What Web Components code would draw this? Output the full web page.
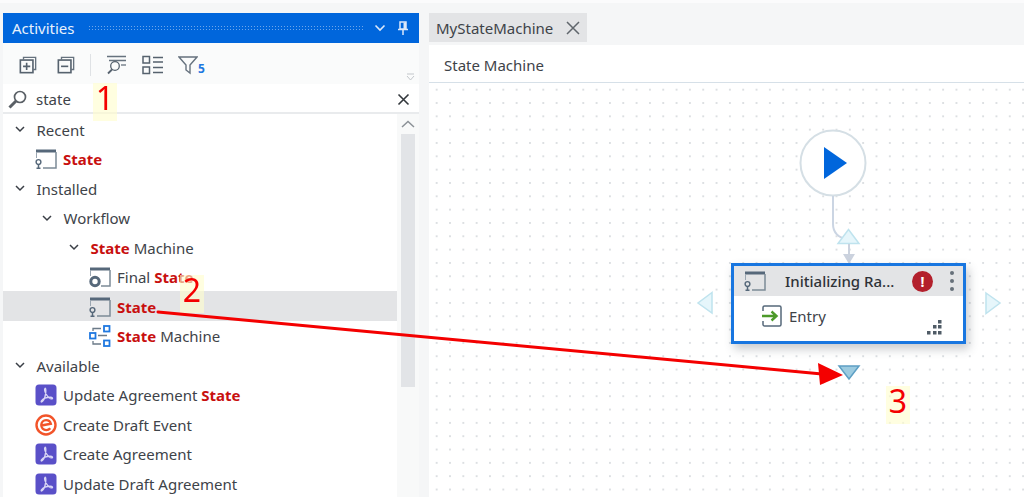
<!DOCTYPE html>
<html>
<head>
<meta charset="utf-8">
<title>MyStateMachine</title>
<style>
  html, body { margin: 0; height: 100%; overflow: hidden; }
  body { background: #f5f6f7; font-family: "Noto Sans", sans-serif; color: #3e4349; }
</style>
</head>
<body>
<studio-app>
  <activities-panel slot="left">
    <tree-row level="0" expander>Recent</tree-row>
    <tree-row level="0" icon="state"><b>State</b></tree-row>
    <tree-row level="0" expander>Installed</tree-row>
    <tree-row level="1" expander>Workflow</tree-row>
    <tree-row level="2" expander><b>State</b> Machine</tree-row>
    <tree-row level="2" icon="final">Final <b>State</b></tree-row>
    <tree-row level="2" icon="state" selected><b>State</b></tree-row>
    <tree-row level="2" icon="machine"><b>State</b> Machine</tree-row>
    <tree-row level="0" expander>Available</tree-row>
    <tree-row level="0" icon="pdf">Update Agreement <b>State</b></tree-row>
    <tree-row level="0" icon="event">Create Draft Event</tree-row>
    <tree-row level="0" icon="pdf">Create Agreement</tree-row>
    <tree-row level="0" icon="pdf">Update Draft Agreement</tree-row>
  </activities-panel>
  <designer-panel slot="right"></designer-panel>
  <note-badge style="left:93px;top:80px">1</note-badge>
  <note-badge style="left:180px;top:272px">2</note-badge>
  <note-badge style="left:886px;top:383px">3</note-badge>
  <drag-arrow></drag-arrow>
</studio-app>

<script>
const ICONS = {
  state: `<svg width="22" height="22" viewBox="0 0 22 22" fill="none">
    <path d="M1 1.500h20v3H1z" fill="#56687a"/>
    <path d="M21 4v16H8" stroke="#7c8a97" stroke-width="1.500"/>
    <path d="M1.500 4v6" stroke="#9aa6b1" stroke-width="1"/>
    <circle cx="3.500" cy="14" r="2.400" stroke="#56687a" stroke-width="1.400"/>
    <path d="M3.500 16.500v3M1.500 20.200h4" stroke="#56687a" stroke-width="1.500"/>
  </svg>`,
  final: `<svg width="22" height="22" viewBox="0 0 22 22" fill="none">
    <path d="M1 1.500h20v3H1z" fill="#56687a"/>
    <path d="M21 4v16H12" stroke="#7c8a97" stroke-width="1.500"/>
    <path d="M1.500 4v6" stroke="#9aa6b1"/>
    <circle cx="6" cy="15.500" r="4.200" stroke="#56687a" stroke-width="3"/>
  </svg>`,
  machine: `<svg width="22" height="22" viewBox="0 0 22 22" fill="none">
    <rect x="15" y="1" width="5.500" height="5.500" stroke="#1f78e0" stroke-width="1.800"/>
    <rect x="1" y="8" width="5.500" height="5.500" stroke="#1f78e0" stroke-width="1.800"/>
    <rect x="15" y="15.500" width="5.500" height="5.500" stroke="#1f78e0" stroke-width="1.800"/>
    <path d="M4 6V3.500h8M9 10.500h9M4 16v3h8" stroke="#6b7a88" stroke-width="1.300"/>
  </svg>`,
  pdf: `<svg width="22" height="22" viewBox="0 0 22 22" fill="none">
    <rect x="0.500" y="0.500" width="21" height="21" rx="3.500" fill="#5a50c8"/>
    <path d="M10 4.500c-.8 1 .1 4 2 7 1.500 2.300 3.500 3.600 5 3.300 1-.3.400-1.500-1.500-1.500-3 0-7.500 1.300-9 3.500-.8 1.200.2 1.500 1 .6 1.800-2 3.200-6.500 3.300-10.500 0-1.800-.4-3-.8-2.400z" stroke="#d9d6f5" stroke-width="1.400"/>
  </svg>`,
  event: `<svg width="22" height="22" viewBox="0 0 22 22" fill="none">
    <circle cx="11" cy="11" r="9.500" fill="#fff" stroke="#f2542a" stroke-width="2.400"/>
    <path d="M6.500 11.500l9.300-1.800c-.6-2.300-2.500-3.600-4.700-3.600-2.700 0-4.800 2.200-4.800 5 0 2.900 2.100 5 4.900 5 1.700 0 3.100-.7 4.100-1.900" stroke="#f2542a" stroke-width="2.400"/>
  </svg>`,
};

class StudioApp extends HTMLElement {
  constructor() {
    super();
    this.attachShadow({ mode: "open" });
    this.shadowRoot.innerHTML = `
      <style>
        :host {
          display: flex;
          position: relative;
          box-sizing: border-box;
          width: 1024px;
          height: 497px;
          padding: 13px 0 0 3px;
          gap: 10px;
          overflow: hidden;
          border-top: 3px solid #fbfbfc;
          filter: blur(0.4px);
        }
        ::slotted([slot="left"]) { flex: 0 0 416px; margin-top: -3px; }
        ::slotted([slot="right"]) { flex: 1; margin-top: -3px; }
      </style>
      <slot name="left"></slot>
      <slot name="right"></slot>
      <slot></slot>
    `;
  }
}

class ActivitiesPanel extends HTMLElement {
  constructor() {
    super();
    this.attachShadow({ mode: "open" });
    this.shadowRoot.innerHTML = `
      <style>
        :host {
          display: flex;
          flex-direction: column;
          min-height: 0;
          background: #fff;
        }
        .title {
          display: flex;
          align-items: center;
          gap: 9px;
          height: 30px;
          padding: 0 10px 0 9px;
          background: #0066dc;
          color: #e8f1fc;
          font-size: 15px;
        }
        .grip {
          flex: 1;
          height: 7px;
          margin-left: 4px;
          background-image: radial-gradient(#6ea6ea 0.8px, transparent 1px);
          background-size: 3px 3px;
        }
        .title svg { display: block; }
        .tools {
          position: relative;
          display: flex;
          align-items: center;
          height: 41px;
          padding: 3px 0 0 16px;
          box-sizing: border-box;
          background: #fafbfb;
        }
        .tools svg { display: block; }
        .sep { width: 1px; height: 22px; background: #dfe2e5; margin: 0 15px; }
        .count { color: #1f78e0; font-size: 12px; font-weight: 700; margin: 6px 0 0 0; }
        .more { position: absolute; right: 4px; bottom: 3px; }
        .search {
          display: flex;
          align-items: center;
          box-sizing: border-box;
          height: 30px;
          padding: 2px 9px 0 4px;
          border-bottom: 2px solid #e9ebed;
          background: #fff;
          font-size: 15px;
        }
        .search span { flex: 1; margin-left: 8px; }
        .body { flex: 1; display: flex; min-height: 0; overflow: hidden; }
        .tree { flex: 1; display: flex; flex-direction: column; }
        .scroll {
          flex: 0 0 22px;
          box-sizing: border-box;
          padding: 0 4px;
          background: #f8f9f9;
        }
        .up { display: block; margin: 6px auto; }
        .thumb { height: 253px; background: #e2e4e7; }
      </style>
      <div class="title">
        <span>Activities</span>
        <div class="grip"></div>
        <svg width="12" height="8" viewBox="0 0 12 8" fill="none"><path d="M1.500 1.500l4.500 4.500 4.500-4.500" stroke="#dbe8fa" stroke-width="1.600"/></svg>
        <svg width="12" height="14" viewBox="0 0 12 14" style="margin-left:2px" fill="none"><path d="M3 1h6v7H3zM1 8.500h10M6 9v5" stroke="#dbe8fa" stroke-width="1.500"/><path d="M6.500 1.500h2.500v6.500h-2.500z" fill="#dbe8fa"/></svg>
      </div>
      <div class="tools">
        <svg width="18" height="18" viewBox="0 0 20 20" fill="none"><path d="M5 4V1.500h13.500V15H16" stroke="#66727e" stroke-width="1.500"/><rect x="1.500" y="4.500" width="14" height="14" stroke="#56626e" stroke-width="1.800"/><path d="M8.500 7.500v8M4.500 11.500h8" stroke="#56626e" stroke-width="1.800"/></svg>
        <svg style="margin-left:20px" width="18" height="18" viewBox="0 0 20 20" fill="none"><path d="M5 4V1.500h13.500V15H16" stroke="#66727e" stroke-width="1.500"/><rect x="1.500" y="4.500" width="14" height="14" stroke="#56626e" stroke-width="1.800"/><path d="M4.500 11.500h8" stroke="#56626e" stroke-width="1.800"/></svg>
        <div class="sep"></div>
        <svg width="21" height="20" viewBox="0 0 21 20" fill="none"><path d="M1 1.500h19M3 5.500h17" stroke="#66727e" stroke-width="1.300"/><circle cx="9" cy="11" r="4.300" stroke="#56626e" stroke-width="1.300"/><path d="M6 14.500l-4 4" stroke="#56626e" stroke-width="1.800"/><path d="M15 10h5" stroke="#66727e" stroke-width="1.300"/></svg>
        <svg style="margin-left:15px" width="22" height="20" viewBox="0 0 22 20" fill="none"><rect x="1" y="1.500" width="6.500" height="6.500" stroke="#56626e" stroke-width="1.500"/><rect x="1" y="12" width="6.500" height="6.500" stroke="#56626e" stroke-width="1.500"/><path d="M11 2.500h10M11 7h10M11 12.500h10M11 17.500h10" stroke="#56626e" stroke-width="1.500"/></svg>
        <svg style="margin-left:14px" width="20" height="20" viewBox="0 0 20 20" fill="none"><path d="M1 2h18l-7 8v8l-4-3v-5z" stroke="#66727e" stroke-width="1.400"/></svg>
        <span class="count">5</span>
        <svg class="more" width="9" height="8" viewBox="0 0 9 8" fill="none"><path d="M1 1h7M1 3l3.500 4L8 3" stroke="#c3c7cb"/></svg>
      </div>
      <div class="search">
        <svg width="21" height="21" viewBox="0 0 21 21" fill="none"><circle cx="13" cy="8" r="5.500" stroke="#5a6066" stroke-width="1.700"/><path d="M9 12L2.500 18.500" stroke="#5a6066" stroke-width="3"/></svg>
        <span>state</span>
        <svg width="13" height="13" viewBox="0 0 13 13" fill="none"><path d="M1.500 1.500l10 10M11.500 1.500l-10 10" stroke="#33383d" stroke-width="1.600"/></svg>
      </div>
      <div class="body">
        <div class="tree"><slot></slot></div>
        <div class="scroll">
          <svg class="up" width="14" height="8" viewBox="0 0 14 8" fill="none"><path d="M1 7l6-5.500L13 7" stroke="#8b9197" stroke-width="1.500"/></svg>
          <div class="thumb"></div>
        </div>
      </div>
    `;
  }
}

class TreeRow extends HTMLElement {
  constructor() {
    super();
    this.attachShadow({ mode: "open" });
  }

  connectedCallback() {
    const level = Number(this.getAttribute("level") || 0);
    const icon = this.getAttribute("icon");
    const lead = this.hasAttribute("expander")
      ? `<svg class="chev" width="10" height="7" viewBox="0 0 10 7" fill="none"><path d="M1 1l4 4 4-4" stroke="#3a3f46" stroke-width="1.500"/></svg>`
      : ICONS[icon] || "";
    this.shadowRoot.innerHTML = `
      <style>
        :host {
          display: flex;
          align-items: center;
          flex: 0 0 29.500px;
          box-sizing: border-box;
          padding-top: 2px;
          padding-left: ${(icon ? 32 : 12) + level * 27}px;
          font-size: 15px;
          white-space: nowrap;
        }
        :host([selected]) { background: #e3e4e6; }
        .lead { display: flex; margin-right: ${icon ? 6 : 11.5}px; }
        ::slotted(b) { color: #c8100f; font-weight: 700; }
      </style>
      <span class="lead">${lead}</span>
      <span><slot></slot></span>
    `;
  }
}

class DesignerPanel extends HTMLElement {
  constructor() {
    super();
    this.attachShadow({ mode: "open" });
    this.shadowRoot.innerHTML = `
      <style>
        :host {
          display: flex;
          flex-direction: column;
          min-height: 0;
        }
        .tabs { display: flex; height: 29px; flex: 0 0 29px; margin-bottom: 3px; }
        .tab {
          display: flex;
          align-items: center;
          gap: 13px;
          padding: 0 7px 0 7px;
          background: #e3e4e6;
          font-size: 15px;
        }
        .crumb {
          box-sizing: border-box;
          height: 38px;
          display: flex;
          align-items: center;
          padding: 2px 0 0 15px;
          background: #fff;
          border-bottom: 1px solid #d6e0e8;
          font-size: 15px;
        }
        .canvas {
          position: relative;
          flex: 1;
          background-color: #fff;
          background-image: radial-gradient(#dcdfe2 0.8px, transparent 1.100px);
          background-size: 13.330px 13.330px;
          background-position: 1px 0;
        }
        .wires { position: absolute; left: 0; top: 0; }
      </style>
      <div class="tabs">
        <div class="tab">
          <span>MyStateMachine</span>
          <svg width="14" height="14" viewBox="0 0 14 14" fill="none"><path d="M1 1l12 12M13 1L1 13" stroke="#60666c" stroke-width="1.500"/></svg>
        </div>
      </div>
      <div class="crumb">State Machine</div>
      <div class="canvas">
        <svg class="wires" width="595" height="320" viewBox="0 0 595 320" fill="none">
          <circle cx="404" cy="80" r="32.500" fill="#fff" stroke="#d5dfe5" stroke-width="2"/>
          <path d="M395 64l23 16-23 16z" fill="#0066dc"/>
          <path d="M404 113v28c0 8 5 14 14 15" stroke="#cbd5e3" stroke-width="2"/>
          <path d="M419.500 146.500l10.500 14h-21z" fill="#e6f6fb" stroke="#bfe3ee" stroke-width="1.500"/>
          <path d="M420 161v12" stroke="#cbd2de" stroke-width="2"/>
          <path d="M414 171h12l-6 10z" fill="#cbd2de"/>
          <path d="M283 209.500l-14 10.500 14 10z" fill="#e6f6fb" stroke="#bfe3ee" stroke-width="1.500"/>
          <path d="M557 210l14 10-14 10.500z" fill="#e6f6fb" stroke="#bfe3ee" stroke-width="1.500"/>
          <path d="M410 283h20l-10 13z" fill="#9ccbe0" stroke="#5d9fc4" stroke-width="1.500"/>
        </svg>
        <state-node style="left:302px;top:180px" title-text="Initializing Ra..."></state-node>
      </div>
    `;
  }
}

class StateNode extends HTMLElement {
  constructor() {
    super();
    this.attachShadow({ mode: "open" });
  }

  connectedCallback() {
    this.shadowRoot.innerHTML = `
      <style>
        :host {
          position: absolute;
          display: block;
          box-sizing: border-box;
          width: 235px;
          height: 81px;
          border: 3px solid #1876e0;
          background: #fff;
          box-shadow: 3px 5px 9px rgba(60, 70, 80, .28);
        }
        .head {
          display: flex;
          align-items: center;
          height: 30px;
          padding-left: 10px;
          background: #e3e4e6;
          font-size: 15px;
          font-weight: 500;
        }
        .name { margin-left: 19px; flex: 1; color: #2e3237; }
        .alert {
          width: 21px;
          height: 21px;
          border-radius: 50%;
          background: #b3202c;
          color: #fff;
          font-size: 14px;
          font-weight: 700;
          line-height: 21px;
          text-align: center;
        }
        .menu { display: grid; gap: 4px; margin: 0 9px 0 17px; }
        .menu i { width: 4px; height: 4px; border-radius: 50%; background: #66707a; }
        .entry {
          display: flex;
          align-items: center;
          gap: 6px;
          padding: 9px 0 0 27px;
          font-size: 15px;
        }
        .entry svg { display: block; }
        .size { position: absolute; right: 21px; bottom: 6px; }
      </style>
      <div class="head">
        ${ICONS.state}
        <span class="name">${this.getAttribute("title-text")}</span>
        <span class="alert">!</span>
        <span class="menu"><i></i><i></i><i></i></span>
      </div>
      <div class="entry">
        <svg width="22" height="22" viewBox="0 0 22 22" fill="none"><path d="M2 6V2.500C2 1.700 2.700 1 3.500 1h15c.8 0 1.500.7 1.500 1.500v17c0 .8-.7 1.500-1.500 1.500h-15C2.700 21 2 20.300 2 19.500V16" stroke="#56687a" stroke-width="1.500"/><path d="M1 11h14M10.500 6.500L15.500 11l-5 4.500" stroke="#4d9a2a" stroke-width="2.400"/></svg>
        <span>Entry</span>
      </div>
      <svg class="size" width="16" height="15" viewBox="0 0 16 15"><g fill="#4f5b66"><rect x="12" y="0" width="3.500" height="3.500"/><rect x="7" y="5" width="3.500" height="3.500"/><rect x="12" y="5" width="3.500" height="3.500"/><rect x="1" y="11" width="3.500" height="3.500"/><rect x="7" y="11" width="3.500" height="3.500"/><rect x="12" y="11" width="3.500" height="3.500"/></g></svg>
    `;
  }
}

class NoteBadge extends HTMLElement {
  constructor() {
    super();
    this.attachShadow({ mode: "open" });
    this.shadowRoot.innerHTML = `
      <style>
        :host {
          position: absolute;
          display: block;
          width: 24px;
          height: 38px;
          background: rgba(255, 253, 205, .62);
          color: #f40000;
          font-size: 32px;
          line-height: 30px;
          text-align: center;
        }
      </style>
      <slot></slot>
    `;
  }
}

class DragArrow extends HTMLElement {
  constructor() {
    super();
    this.attachShadow({ mode: "open" });
    this.shadowRoot.innerHTML = `
      <style>
        :host { position: absolute; left: 0; top: 0; display: block; pointer-events: none; }
        svg { display: block; }
      </style>
      <svg width="1024" height="497" viewBox="0 0 1024 497" fill="none">
        <path d="M158 309L822 371" stroke="#f40000" stroke-width="3" stroke-linecap="round"/>
        <path d="M843 372L818 360l2 22z" fill="#f40000"/>
      </svg>
    `;
  }
}

customElements.define("studio-app", StudioApp);
customElements.define("activities-panel", ActivitiesPanel);
customElements.define("tree-row", TreeRow);
customElements.define("designer-panel", DesignerPanel);
customElements.define("state-node", StateNode);
customElements.define("note-badge", NoteBadge);
customElements.define("drag-arrow", DragArrow);
</script>
</body>
</html>
